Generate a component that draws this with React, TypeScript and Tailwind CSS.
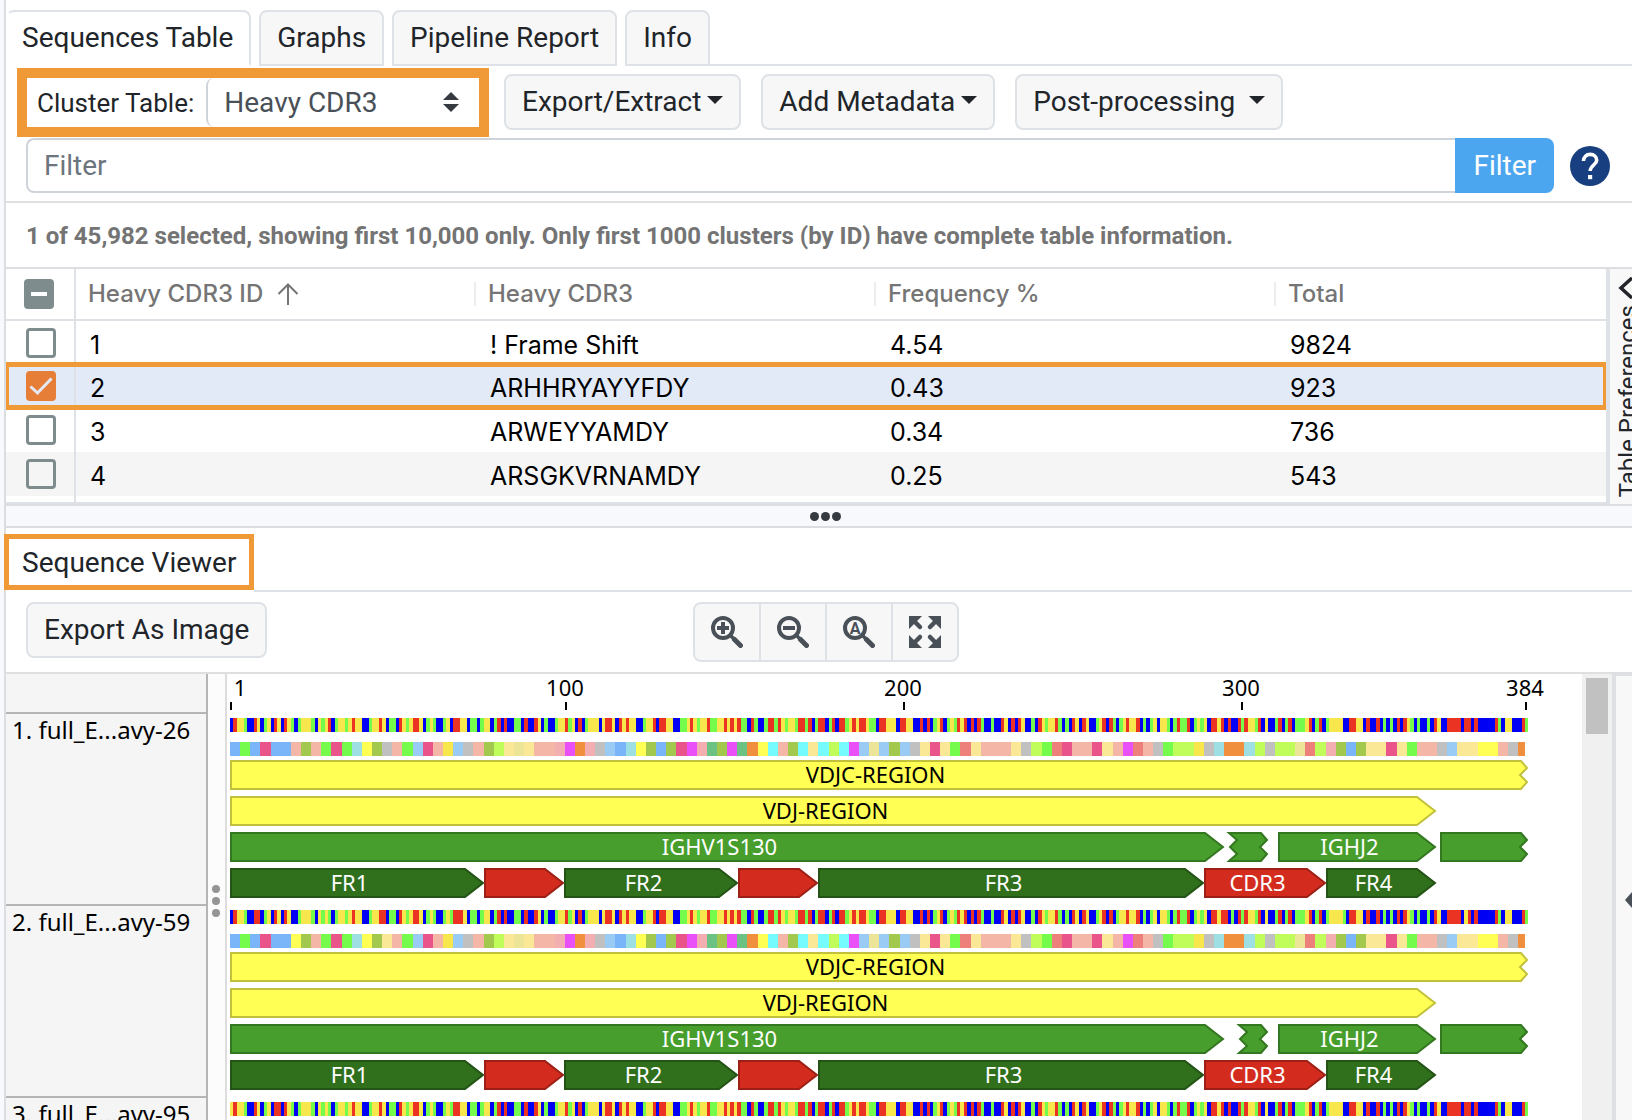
import { useState } from 'react'
import clsx from 'clsx'

type Mark = {
  from: number
  to: number
  kind: 'yellow' | 'green' | 'dark' | 'red'
  label?: string
  start?: 'torn'
  end: 'arrow' | 'torn'
}

interface Cluster {
  id: number
  cdr3: string
  frequency: string
  total: number
}

interface Sequence {
  name: string
  bases: string
  residues: string
  rows: Mark[][]
}

const clusters: Cluster[] = [
  { id: 1, cdr3: '! Frame Shift', frequency: '4.54', total: 9824 },
  { id: 2, cdr3: 'ARHHRYAYYFDY', frequency: '0.43', total: 923 },
  { id: 3, cdr3: 'ARWEYYAMDY', frequency: '0.34', total: 736 },
  { id: 4, cdr3: 'ARSGKVRNAMDY', frequency: '0.25', total: 543 },
]

// B, R, Y, G are the display colours of the four bases
const HEAD_1 =
  'BRYYGBBRYBGYBRYBRYGBGYYYGBYGYRBGYYGYRYYBBGYYRYBGGBRYGYRRYBGYGBBGYBRRYYBGGBGYYBGR'
const HEAD_2 =
  'BRYYGBBRRBGYBRYBRYBBGYYYGBYGYGBGYYGYRYYBBGYYRRBGGBRYGYRRYBGYGBBGYGRRRYBGGBGYYBGR'
const HEAD_3 =
  'YRYYGBBRYBGYBRRBRYGBGYYYGBYGYGBGYYGYRYYBBGYYRYBGGBRYGYRRYBGYGBBGYGRRYYBGGBGYYBGR'
const MIDDLE =
  'BRBBGGBRBBRYBGBBGYYRGYBRBGYYYBYRRYBRYRYYBB' +
  'GYYRBRRYYBBGGYRYGYYRGGYYRYRYRGGBRGBBGRRGRYGYYGRRGRBGRRBGRBRRGYRYRRYGGB' +
  'RRYYYBRRYYBBRBRBGYRBGYGRYRBRBRGBBGBBRYBRBRYBBGBRYGYYRGBGBRYBRYBBGYRBR'
const TAIL_1 =
  'GBGYRYYRBGBGYBYYGBGRGGRBGYGYBRRYRBRBBRGRYYGRBYBBGRBGRBGGGYRBGRBGYYYYBB' +
  'RRYYBRBBRBGBGBRBRYGBGBBGBRYBBRRRRBRRBRBBBBBRGBYYBBBRG'
const TAIL_2 =
  'BGYYRYYRBGBGYBYYGBGRGGRBGYGYBRRYRRBGBRGRYYGRBYBBGRBGRBGGGYRBGRBGYYYYGB' +
  'RRYYBRBBRBGBGBRBRYGBGBBGBRYBBRRRRBYRBRBBBBBRGBYYBBBRG'

const RES_A = 'agapaa'
const RES_B = 'osgpgtyo'
const RES_C =
  'sglpsYlksocehessqmrqklatyoaopmqnomnryzsozezczmlhlolkepegxesssekcgxpsspes' +
  'mxskgccYktrrtckcchxcqoaoeepegsskleeyyskr'

const baseColors: Record<string, string> = {
  B: '#0000f5',
  R: '#ea3323',
  Y: '#f8e64d',
  G: '#75fb4c',
}

const residueColors: Record<string, string> = {
  a: '#7ab4f9',
  g: '#75fb4c',
  p: '#e9548b',
  s: '#f4b6a6',
  o: '#a2c84e',
  t: '#9ddfe2',
  y: '#ffff54',
  k: '#c0c0c0',
  l: '#99cbf5',
  Y: '#f8e64d',
  c: '#c0fc5a',
  e: '#fbe896',
  h: '#ece497',
  q: '#f3aeb1',
  m: '#ea50f7',
  r: '#f0903f',
  n: '#6bc283',
  x: '#ed807b',
  z: '#75fbfd',
}

const markColors = {
  yellow: { fill: '#ffff54', stroke: '#c2c13d', text: '#000000' },
  green: { fill: '#479e2c', stroke: '#337720', text: '#ffffff' },
  dark: { fill: '#30701d', stroke: '#235315', text: '#ffffff' },
  red: { fill: '#d32c1f', stroke: '#9c2016', text: '#ffffff' },
}

const BASE_WIDTH = 3.3815
const CANVAS_WIDTH = 1340

const buildRows = (dStart: number): Mark[][] => [
  [{ from: 0, to: 1298, kind: 'yellow', label: 'VDJC-REGION', end: 'torn' }],
  [{ from: 0, to: 1206, kind: 'yellow', label: 'VDJ-REGION', end: 'arrow' }],
  [
    { from: 0, to: 994, kind: 'green', label: 'IGHV1S130', end: 'arrow' },
    { from: dStart, to: 1038, kind: 'green', start: 'torn', end: 'torn' },
    { from: 1048, to: 1206, kind: 'green', label: 'IGHJ2', end: 'arrow' },
    { from: 1210, to: 1298, kind: 'green', end: 'torn' },
  ],
  [
    { from: 0, to: 254, kind: 'dark', label: 'FR1', end: 'arrow' },
    { from: 254, to: 334, kind: 'red', end: 'arrow' },
    { from: 334, to: 508, kind: 'dark', label: 'FR2', end: 'arrow' },
    { from: 508, to: 588, kind: 'red', end: 'arrow' },
    { from: 588, to: 974, kind: 'dark', label: 'FR3', end: 'arrow' },
    { from: 974, to: 1096, kind: 'red', label: 'CDR3', end: 'arrow' },
    { from: 1096, to: 1206, kind: 'dark', label: 'FR4', end: 'arrow' },
  ],
]

const sequences: Sequence[] = [
  {
    name: '1. full_E...avy-26',
    bases: HEAD_1 + MIDDLE + TAIL_1,
    residues: RES_A + 's' + RES_B + 'k' + RES_C,
    rows: buildRows(998),
  },
  {
    name: '2. full_E...avy-59',
    bases: HEAD_2 + MIDDLE + TAIL_2,
    residues: RES_A + 'y' + RES_B + 'e' + RES_C,
    rows: buildRows(1008),
  },
  {
    name: '3. full_E...avy-95',
    bases: HEAD_3 + MIDDLE + TAIL_1,
    residues: RES_A + 's' + RES_B + 'k' + RES_C,
    rows: buildRows(998),
  },
]

const ticks = [
  { at: 1, label: '1', x: 10 },
  { at: 100, label: '100', x: 335 },
  { at: 200, label: '200', x: 673 },
  { at: 300, label: '300', x: 1011 },
  { at: 384, label: '384', x: 1295 },
]

function markPath({ from, to, start, end }: Mark) {
  const l = from + 1
  const r = to - 1
  const right =
    end === 'arrow'
      ? `H${r - 18} L${r} 15 L${r - 18} 29`
      : `H${r - 6} L${r} 8 L${r - 7} 15 L${r} 22 L${r - 6} 29`
  const left = start === 'torn' ? `H${l} L${l + 8} 22 L${l + 1} 15 L${l + 8} 8 Z` : `H${l} Z`
  return `M${l} 1 ${right} ${left}`
}

function Annotation({ mark }: { mark: Mark }) {
  const colors = markColors[mark.kind]
  const head = mark.end === 'arrow' ? 15 : 7
  return (
    <g>
      <path d={markPath(mark)} fill={colors.fill} stroke={colors.stroke} strokeWidth="2" />
      {mark.label && (
        <text
          x={(mark.from + mark.to - head) / 2}
          y="23"
          textAnchor="middle"
          fill={colors.text}
          className="font-['Noto_Sans',sans-serif] text-[22px]"
        >
          {mark.label}
        </text>
      )}
    </g>
  )
}

function Tracks({ sequence }: { sequence: Sequence }) {
  return (
    <svg width={CANVAS_WIDTH} height="192" className="block shrink-0" role="img" aria-label={sequence.name}>
      <g shapeRendering="crispEdges">
        {sequence.bases.split('').map((base, i) => (
          <rect key={i} x={i * BASE_WIDTH} y="4" width={BASE_WIDTH} height="14" fill={baseColors[base]} />
        ))}
        {sequence.residues.split('').map((residue, i) => (
          <rect
            key={i}
            x={i * 3 * BASE_WIDTH}
            y="28"
            width={(i === 127 ? 2 : 3) * BASE_WIDTH}
            height="14"
            fill={residueColors[residue]}
          />
        ))}
      </g>
      {sequence.rows.map((row, i) => (
        <g key={i} transform={`translate(0 ${46 + i * 36})`}>
          {row.map((mark) => (
            <Annotation key={mark.from} mark={mark} />
          ))}
        </g>
      ))}
    </svg>
  )
}

function Ruler() {
  return (
    <svg width={CANVAS_WIDTH} height="40" className="block shrink-0">
      {ticks.map((tick) => (
        <g key={tick.at}>
          <text x={tick.x} y="22" textAnchor="middle" className="font-['Noto_Sans',sans-serif] text-[22px]">
            {tick.label}
          </text>
          <rect x={Math.floor((tick.at - 0.5) * BASE_WIDTH - 1)} y="28" width="2" height="8" />
        </g>
      ))}
    </svg>
  )
}

function Lens({ children }: { children: React.ReactNode }) {
  return (
    <svg width="32" height="32" viewBox="0 0 32 32" fill="none" stroke="currentColor">
      <circle cx="12" cy="12" r="10" strokeWidth="4" />
      <path d="M19.5 19.5 23 23" strokeWidth="3.5" />
      <path d="M23.5 23.5 29.5 29.5" strokeWidth="5" strokeLinecap="round" />
      {children}
    </svg>
  )
}

const zoomButtons = [
  {
    label: 'Zoom in',
    icon: (
      <Lens>
        <path d="M6 12h12M12 6v12" strokeWidth="4" />
      </Lens>
    ),
  },
  {
    label: 'Zoom out',
    icon: (
      <Lens>
        <path d="M6 12h12" strokeWidth="4" />
      </Lens>
    ),
  },
  {
    label: 'Zoom to selection',
    icon: (
      <Lens>
        <text
          x="12"
          y="18"
          textAnchor="middle"
          fill="currentColor"
          stroke="none"
          className="font-['Roboto',sans-serif] text-base font-bold"
        >
          A
        </text>
      </Lens>
    ),
  },
  {
    label: 'Fit to window',
    icon: (
      <svg width="32" height="32" viewBox="0 0 32 32" fill="currentColor" stroke="currentColor">
        <path d="M0 0h13L0 13zM32 0v13L19 0zM0 32V19l13 13zM32 32H19l13-13z" stroke="none" />
        <path
          d="M5 5l6 6M27 5l-6 6M5 27l6-6M27 27l-6-6"
          strokeWidth="4.5"
          strokeLinecap="round"
        />
      </svg>
    ),
  },
]

function Caret() {
  return (
    <svg width="16" height="8" viewBox="0 0 16 8" fill="currentColor" className="mb-1">
      <path d="M0 0h16L8 8z" />
    </svg>
  )
}

function MenuButton({ label, wide }: { label: string; wide?: boolean }) {
  return (
    <button
      type="button"
      className={clsx(
        'mt-1.5 flex h-14 items-center rounded-lg border-2 border-[#dee2e6] bg-[#f7f7f8] px-4 whitespace-nowrap',
        wide ? 'gap-3.5' : 'gap-1.5',
      )}
    >
      {label}
      <Caret />
    </button>
  )
}

function RowCheckbox({ label, checked, onChange }: { label: string; checked: boolean; onChange: () => void }) {
  return (
    <span className="relative ml-5 block size-[30px]">
      <input
        type="checkbox"
        aria-label={label}
        checked={checked}
        onChange={onChange}
        className="block size-[30px] appearance-none rounded border-[3px] border-[#7f8c8d] checked:border-[#e67e37] checked:bg-[#e67e37]"
      />
      {checked && (
        <svg viewBox="0 0 30 30" className="pointer-events-none absolute inset-0" fill="none" stroke="#e3eaf7">
          <path d="M4.500 15.500 11.500 22 25.500 7.500" strokeWidth="3" />
        </svg>
      )}
    </span>
  )
}

export default function App() {
  const [activeTab, setActiveTab] = useState('Sequences Table')
  const [selected, setSelected] = useState<number[]>([2])
  const [filter, setFilter] = useState('')

  const toggle = (id: number) => {
    setSelected((prev) => (prev.includes(id) ? prev.filter((x) => x !== id) : [...prev, id]))
  }

  return (
    <div className="flex h-screen overflow-hidden bg-white font-['Roboto',sans-serif] text-[28px] leading-8 text-[#212529]">
      <div className="w-1.5 shrink-0 border-r-2 border-[#dcdde0] bg-[#f8f9fc]" />

      <main className="flex min-w-0 flex-1 flex-col">
        <nav className="flex shrink-0 gap-2 pt-2.5">
          {['Sequences Table', 'Graphs', 'Pipeline Report', 'Info'].map((tab) => (
            <button
              key={tab}
              type="button"
              onClick={() => setActiveTab(tab)}
              className={clsx(
                'h-14 rounded-t-lg border-2 whitespace-nowrap',
                activeTab === tab
                  ? 'border-[#dee2e6] border-b-white border-l-white bg-white pr-4 pl-3.5'
                  : 'border-[#dee2e6] bg-[#f7f7f8] px-4',
              )}
            >
              {tab}
            </button>
          ))}
          <div className="-ml-2 flex-1 border-b-2 border-[#dee2e6]" />
        </nav>

        <div className="flex shrink-0 items-start gap-5 pt-0.5 pb-px pl-[11px]">
          <div className="-mr-[5px] flex h-[69px] w-[472px] border-[10px] border-[#f09937] bg-white pl-2.5">
            <label htmlFor="cluster" className="flex items-center pr-3 text-[26px] whitespace-nowrap">
              Cluster Table:
            </label>
            <div className="relative flex-1">
              <select
                id="cluster"
                className="size-full appearance-none rounded-l-lg border-l-2 border-[#ced4da] bg-white pl-4 text-[#495057]"
              >
                <option>Heavy CDR3</option>
                <option>Light CDR3</option>
              </select>
              <svg
                viewBox="0 0 16 20"
                className="pointer-events-none absolute top-3.5 right-5 h-5 w-4"
                fill="#343a40"
              >
                <path d="M8 0l8 8H0zM8 20l8-8H0z" />
              </svg>
            </div>
          </div>
          <MenuButton label="Export/Extract" />
          <MenuButton label="Add Metadata" />
          <MenuButton label="Post-processing" wide />
        </div>

        <div className="flex shrink-0 items-center border-b-2 border-[#dedfe1] pr-[22px] pb-2 pl-5">
          <input
            type="text"
            aria-label="Filter"
            placeholder="Filter"
            value={filter}
            onChange={(e) => setFilter(e.target.value)}
            className="h-[55px] min-w-0 flex-1 rounded-l-lg border-2 border-r-0 border-[#ced4da] px-4 placeholder:text-[#6c757d]"
          />
          <button type="button" className="h-[55px] rounded-r-lg bg-[#4ca6ef] px-[18px] text-white">
            Filter
          </button>
          <a href="#help" aria-label="Help" className="ml-4">
            <svg width="40" height="40" viewBox="0 0 40 40" fill="none">
              <circle cx="20" cy="20" r="20" fill="#183f7f" />
              <path
                d="M13.500 15c0-4 2.900-6.600 6.700-6.600 3.700 0 6.500 2.400 6.500 5.800 0 4.600-6.500 5.200-6.500 10.800"
                stroke="#fff"
                strokeWidth="3.600"
              />
              <path d="M18 29h4.200v4.200H18z" fill="#fff" />
            </svg>
          </a>
        </div>

        <p className="flex h-16 shrink-0 items-center pt-0.5 pl-5 text-2xl font-bold text-[#747474]">
          1 of 45,982 selected, showing first 10,000 only. Only first 1000 clusters (by ID) have complete table
          information.
        </p>

        <section className="flex h-[239px] shrink-0 overflow-hidden border-y-2 border-[#dcdee2]">
          <div className="min-w-0 flex-1 border-b-2 border-[#dee2e6]">
            <table className="w-full table-fixed border-collapse text-left font-['Inter',sans-serif]">
              <colgroup>
                <col className="w-[69px]" />
                <col className="w-[401px]" />
                <col className="w-[400px]" />
                <col className="w-[400px]" />
                <col />
              </colgroup>
              <thead className="text-2xl text-[#757575]">
                <tr className="h-[51px] border-b-2 border-[#dee2e6]">
                  <th className="border-r-2 border-[#dee2e6] p-0">
                    <button
                      type="button"
                      aria-label="Clear selection"
                      className="ml-[18px] flex size-[30px] items-center justify-center rounded bg-[#7f8c8d]"
                    >
                      <span className="h-1 w-4 bg-white" />
                    </button>
                  </th>
                  <th className="p-0 font-medium">
                    <div className="flex h-6 items-center gap-3.5 pl-3">
                      Heavy CDR3 ID
                      <svg width="22" height="22" viewBox="0 0 22 22" fill="none" stroke="currentColor" strokeWidth="2">
                        <path d="M11 22V2M1.500 11 11 1.500 20.500 11" />
                      </svg>
                    </div>
                  </th>
                  {['Heavy CDR3', 'Frequency %', 'Total'].map((name) => (
                    <th key={name} className="p-0 font-medium">
                      <div className="-ml-0.5 flex h-6 items-center border-l-2 border-[#ebedef] pl-3">{name}</div>
                    </th>
                  ))}
                </tr>
              </thead>
              <tbody className="text-[25px] text-black">
                {clusters.map((cluster) => {
                  const isSelected = selected.includes(cluster.id)
                  return (
                    <tr
                      key={cluster.id}
                      className={clsx(
                        'h-11',
                        isSelected
                          ? 'bg-[#e3eaf7] outline-[5px] -outline-offset-3 outline-[#f09937]'
                          : cluster.id % 2 === 0 && 'bg-[#f5f5f5]',
                      )}
                    >
                      <td className="border-r-2 border-[#dee2e6] p-0">
                        <RowCheckbox
                          label={`Select cluster ${cluster.id}`}
                          checked={isSelected}
                          onChange={() => toggle(cluster.id)}
                        />
                      </td>
                      <td className="p-0 pt-1 pl-3.5">{cluster.id}</td>
                      <td className="p-0 pt-1 pl-3.5">{cluster.cdr3}</td>
                      <td className="p-0 pt-1 pl-3.5">{cluster.frequency}</td>
                      <td className="p-0 pt-1 pl-3.5">{cluster.total}</td>
                    </tr>
                  )
                })}
                <tr className="h-3">
                  <td className="border-r-2 border-[#dee2e6] p-0" />
                </tr>
              </tbody>
            </table>
          </div>
          <button
            type="button"
            className="flex w-[26px] shrink-0 flex-col items-start gap-1.5 overflow-hidden border-l-4 border-[#dee2e6] bg-[#f8f8f9] pt-2 pl-0.5"
          >
            <svg width="20" height="22" viewBox="0 0 20 22" fill="none" stroke="#212529" className="ml-1.5 shrink-0">
              <path d="M14 1 3 11 14 21" strokeWidth="3.500" />
            </svg>
            <span className="rotate-180 text-2xl whitespace-nowrap [writing-mode:vertical-rl]">
              Table Preferences
            </span>
          </button>
        </section>

        <div className="flex h-[22px] shrink-0 items-center justify-center gap-0.5 border-b-2 border-[#dcdde0] bg-[#f8f9fc] pl-3">
          {[0, 1, 2].map((dot) => (
            <span key={dot} className="size-[9px] rounded-full bg-[#343a40]" />
          ))}
        </div>

        <div className="flex h-16 shrink-0 items-start pt-1.5">
          <button
            type="button"
            className="z-10 -ml-0.5 h-14 border-[5px] border-[#f09937] bg-white px-[13px] pt-0.5 whitespace-nowrap"
          >
            Sequence Viewer
          </button>
          <div className="h-full flex-1 border-b-2 border-[#dee2e6]" />
        </div>

        <div className="grid h-[82px] shrink-0 grid-cols-[1fr_auto_1fr] items-start border-b-2 border-[#dedfe1] pt-2.5 pr-1.5 pl-5">
          <button
            type="button"
            className="h-14 justify-self-start rounded-lg border-2 border-[#dee2e6] bg-[#f7f7f8] px-4 whitespace-nowrap"
          >
            Export As Image
          </button>
          <div className="flex h-[60px] divide-x-2 divide-[#dee2e6] overflow-hidden rounded-lg border-2 border-[#dee2e6] bg-[#f7f7f8] text-[#495057]">
            {zoomButtons.map((button) => (
              <button
                key={button.label}
                type="button"
                aria-label={button.label}
                className="flex w-[66px] items-center justify-center last:w-16"
              >
                {button.icon}
              </button>
            ))}
          </div>
        </div>

        <section className="flex min-h-0 flex-1">
          <div className="w-[202px] shrink-0 overflow-hidden border-r-2 border-[#b5b5b5] bg-[#f5f5f5] font-['Noto_Sans',sans-serif] text-2xl text-black">
            <div className="h-10 border-b-2 border-[#b5b5b5]" />
            {sequences.map((sequence) => (
              <div key={sequence.name} className="h-48 border-b-2 border-[#b5b5b5] pl-1.5 whitespace-nowrap">
                {sequence.name}
              </div>
            ))}
          </div>
          <div className="flex w-[19px] shrink-0 flex-col items-center justify-center gap-1 border-r-2 border-[#dddddd] bg-[#fcfcfc] pt-2 pr-px">
            {[0, 1, 2].map((dot) => (
              <span key={dot} className="size-2 rounded-full bg-[#959595]" />
            ))}
          </div>
          <div className="min-w-0 flex-1 overflow-hidden pl-[3px]">
            <Ruler />
            {sequences.map((sequence) => (
              <Tracks key={sequence.name} sequence={sequence} />
            ))}
          </div>
          <div className="w-[30px] shrink-0 bg-[#f0f0f0] px-1 pt-1">
            <div className="h-14 bg-[#c1c1c1]" />
          </div>
          <button
            type="button"
            aria-label="Show viewer options"
            className="flex w-5 shrink-0 items-center justify-end border-t-2 border-l-4 border-[#dee0e4] bg-[#f8f8f9] pt-1"
          >
            <svg width="7" height="16" viewBox="0 0 7 16" fill="#495057">
              <path d="M0 8 7 0v16z" />
            </svg>
          </button>
        </section>
      </main>
    </div>
  )
}
